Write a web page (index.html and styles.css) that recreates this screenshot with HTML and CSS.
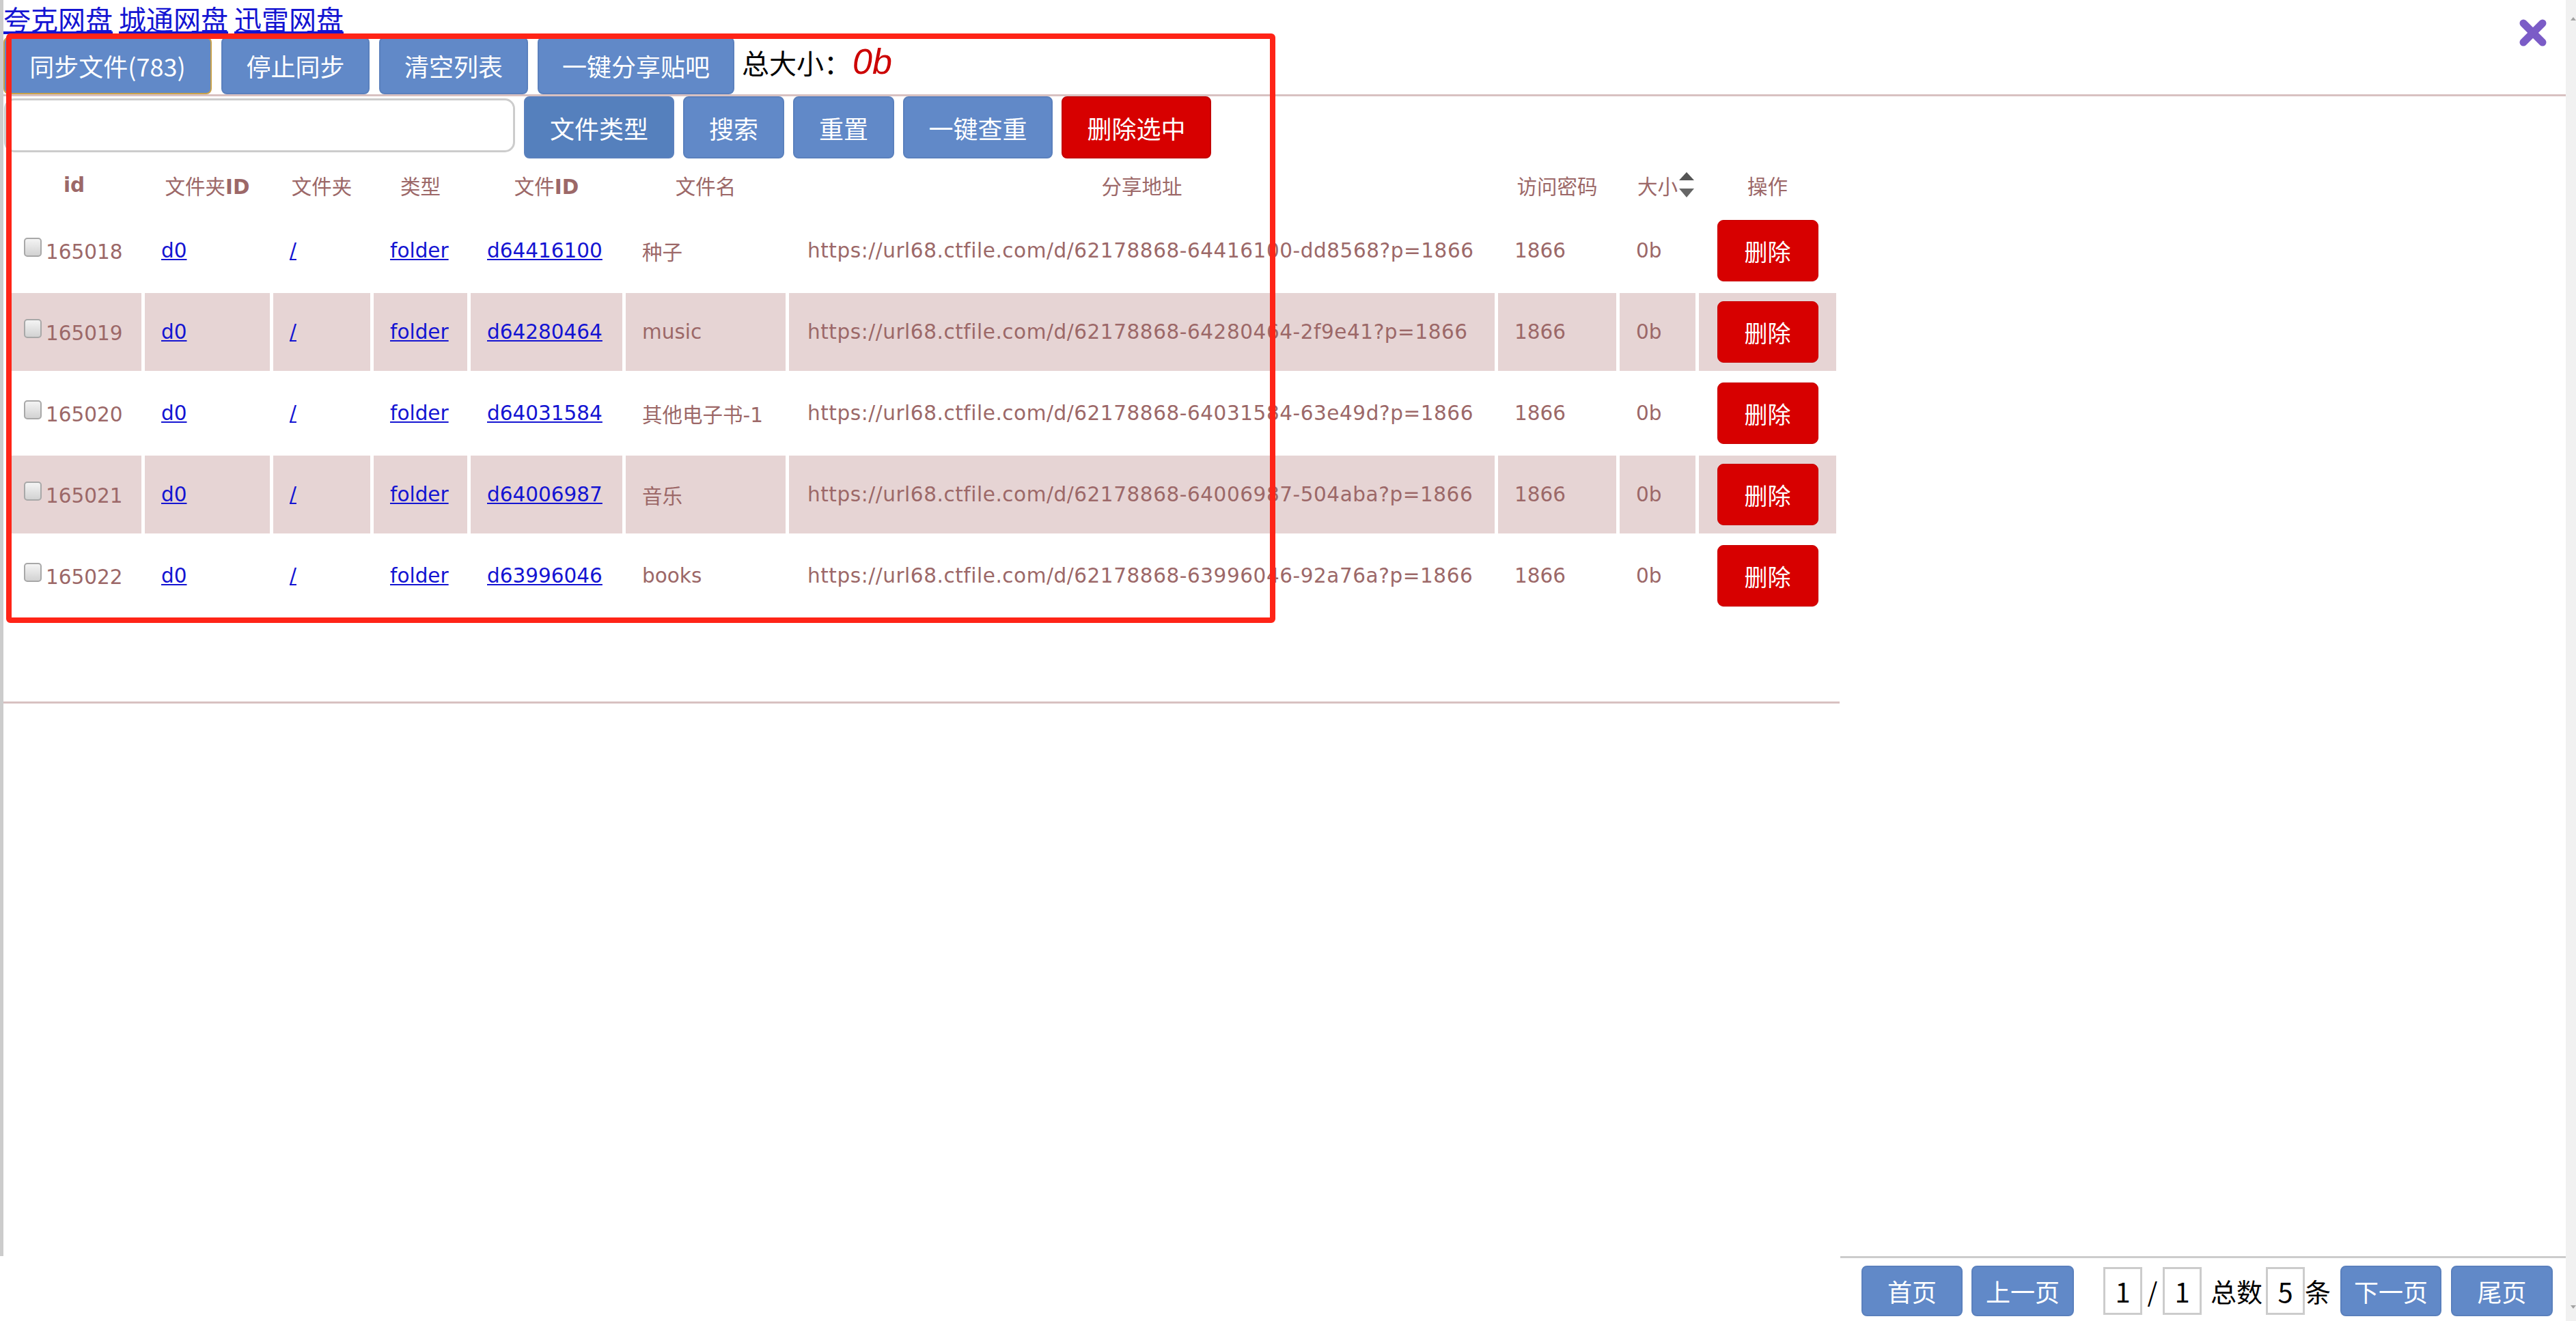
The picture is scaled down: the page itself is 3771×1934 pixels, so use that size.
FILE: index.html
```html
<!DOCTYPE html>
<html lang="zh-CN">
<head>
<meta charset="utf-8">
<title>文件同步</title>
<link rel="stylesheet" href="styles.css">
</head>
<body>
<div class="app">
  <div class="page">
    <div class="main">
      <div class="links"><a href="#">夸克网盘</a> <a href="#">城通网盘</a> <a href="#">迅雷网盘</a></div>
      <div class="bar bar1">
        <button class="btn btn-focus w-sync">同步文件(783)</button>
        <button class="btn w-stop">停止同步</button>
        <button class="btn w-clear">清空列表</button>
        <button class="btn w-share">一键分享贴吧</button>
        <span class="total">总大小：<em class="total-val">0b</em></span>
      </div>
      <div class="bar bar2">
        <input class="search" type="text">
        <button class="btn btn-dark w-type">文件类型</button>
        <button class="btn w-s">搜索</button>
        <button class="btn w-s">重置</button>
        <button class="btn w-dup">一键查重</button>
        <button class="btn btn-red w-del">删除选中</button>
      </div>
      <div class="grid-wrap">
        <table class="grid">
          <thead>
            <tr>
              <th class="c1"><span class="b">id</span></th>
              <th class="c2">文件夹<span class="b">ID</span></th>
              <th class="c3">文件夹</th>
              <th class="c4">类型</th>
              <th class="c5">文件<span class="b">ID</span></th>
              <th class="c6">文件名</th>
              <th class="c7">分享地址</th>
              <th class="c8">访问密码</th>
              <th class="c9">大小<span class="sort"></span></th>
              <th class="c10">操作</th>
            </tr>
          </thead>
          <tbody>
            <tr>
              <td><input class="chk" type="checkbox">165018</td>
              <td><a href="#">d0</a></td>
              <td><a href="#">/</a></td>
              <td><a href="#">folder</a></td>
              <td><a href="#">d64416100</a></td>
              <td>种子</td>
              <td class="url">https://url68.ctfile.com/d/62178868-64416100-dd8568?p=1866</td>
              <td>1866</td>
              <td>0b</td>
              <td class="op"><button class="btn-del">删除</button></td>
            </tr>
            <tr class="alt">
              <td><input class="chk" type="checkbox">165019</td>
              <td><a href="#">d0</a></td>
              <td><a href="#">/</a></td>
              <td><a href="#">folder</a></td>
              <td><a href="#">d64280464</a></td>
              <td>music</td>
              <td class="url">https://url68.ctfile.com/d/62178868-64280464-2f9e41?p=1866</td>
              <td>1866</td>
              <td>0b</td>
              <td class="op"><button class="btn-del">删除</button></td>
            </tr>
            <tr>
              <td><input class="chk" type="checkbox">165020</td>
              <td><a href="#">d0</a></td>
              <td><a href="#">/</a></td>
              <td><a href="#">folder</a></td>
              <td><a href="#">d64031584</a></td>
              <td>其他电子书-1</td>
              <td class="url">https://url68.ctfile.com/d/62178868-64031584-63e49d?p=1866</td>
              <td>1866</td>
              <td>0b</td>
              <td class="op"><button class="btn-del">删除</button></td>
            </tr>
            <tr class="alt">
              <td><input class="chk" type="checkbox">165021</td>
              <td><a href="#">d0</a></td>
              <td><a href="#">/</a></td>
              <td><a href="#">folder</a></td>
              <td><a href="#">d64006987</a></td>
              <td>音乐</td>
              <td class="url">https://url68.ctfile.com/d/62178868-64006987-504aba?p=1866</td>
              <td>1866</td>
              <td>0b</td>
              <td class="op"><button class="btn-del">删除</button></td>
            </tr>
            <tr>
              <td><input class="chk" type="checkbox">165022</td>
              <td><a href="#">d0</a></td>
              <td><a href="#">/</a></td>
              <td><a href="#">folder</a></td>
              <td><a href="#">d63996046</a></td>
              <td>books</td>
              <td class="url">https://url68.ctfile.com/d/62178868-63996046-92a76a?p=1866</td>
              <td>1866</td>
              <td>0b</td>
              <td class="op"><button class="btn-del">删除</button></td>
            </tr>
          </tbody>
        </table>
      </div>
    </div>
    <div class="pager-row">
      <div class="pager">
        <button class="btn pbtn w-p1">首页</button>
        <button class="btn pbtn w-p2 gap-prev">上一页</button>
        <input class="pnum" type="text" value="1">
        <span class="ptext slash">/</span>
        <input class="pnum" type="text" value="1">
        <span class="ptext count">总数</span>
        <input class="pnum" type="text" value="5">
        <span class="ptext unit">条</span>
        <button class="btn pbtn w-p1 gap-next">下一页</button>
        <button class="btn pbtn w-p3">尾页</button>
      </div>
    </div>
    <svg class="close" viewBox="0 0 40 40" aria-label="关闭">
      <line x1="6" y1="6" x2="34" y2="34"/>
      <line x1="34" y1="6" x2="6" y2="34"/>
    </svg>
    <div class="annot"></div>
  </div>
  <div class="scrollbar"><span class="sb-up"></span><span class="sb-down"></span></div>
</div>
</body>
</html>
```
FILE: styles.css
```css
html, body {
  margin: 0;
  padding: 0;
  background: #fff;
}
body {
  font-family: "Noto Sans CJK SC", sans-serif;
  overflow: hidden;
}
.app {
  display: flex;
  height: 1934px;
}
.page {
  flex: 1;
  min-width: 0;
  display: flex;
  flex-direction: column;
  position: relative;
}
.main {
  flex: 1;
  border-left: 5px solid #cccccc;
}
.links {
  height: 54px;
  font-size: 40px;
  line-height: 55px;
  white-space: nowrap;
}
.links a {
  color: #1414d2;
  text-decoration: underline;
}
.bar {
  display: flex;
}
.bar1 {
  height: 84px;
  gap: 14px;
  align-items: center;
  border-bottom: 3px solid #d8c1c1;
}
.bar2 {
  height: 91px;
  gap: 13px;
  align-items: flex-start;
}
.btn {
  font-family: "Noto Sans CJK SC", sans-serif;
  font-size: 36px;
  color: #fff;
  background: #6189c8;
  border: 2px solid #5a80bd;
  border-radius: 8px;
  padding: 0;
  box-sizing: border-box;
  white-space: nowrap;
}
.bar1 .btn { height: 84px; }
.bar2 .btn { height: 91px; }
.btn-focus { border-color: #c9a24a; }
.btn-dark { background: #5580bd; }
.btn-red { background: #d70000; border-color: #c40000; }
.w-sync { width: 305px; }
.w-stop { width: 217px; }
.w-clear { width: 218px; }
.w-share { width: 288px; }
.w-type { width: 220px; }
.w-s { width: 148px; }
.w-dup { width: 219px; }
.w-del { width: 219px; }
.total {
  font-size: 40px;
  color: #000;
  white-space: nowrap;
  padding-bottom: 12px;
  margin-left: -3px;
}
.total-val {
  font-family: "Liberation Sans", sans-serif;
  font-style: italic;
  font-size: 52px;
  color: #cc0000;
  margin-left: 2px;
}
.search {
  width: 748px;
  height: 79px;
  margin: 3px 0 0 1px;
  border: 3px solid #cccccc;
  border-radius: 15px;
  box-sizing: border-box;
  background: #fff;
  outline: none;
}

/* table */
.grid-wrap {
  width: 2688px;
  padding-bottom: 122px;
  border-bottom: 3px solid #d8c1c1;
}
.grid {
  border-collapse: separate;
  border-spacing: 5px;
  table-layout: fixed;
  width: 2688px;
  font-family: "DejaVu Sans", "Noto Sans CJK SC", sans-serif;
  font-size: 29.5px;
  color: #9c6868;
}
.grid th {
  height: 68px;
  padding: 0;
  font-weight: normal;
  text-align: center;
  vertical-align: middle;
  white-space: nowrap;
}
.grid th .b { font-weight: bold; }
.c1 { width: 197px; }
.c2 { width: 183px; }
.c3 { width: 142px; }
.c4 { width: 137px; }
.c5 { width: 222px; }
.c6 { width: 234px; }
.c7 { width: 1033px; }
.c8 { width: 173px; }
.c9 { width: 111px; position: relative; }
.c10 { width: 201px; }
.sort {
  position: absolute;
  left: 86px;
  top: 15px;
  width: 24px;
  height: 38px;
}
.sort::before,
.sort::after {
  content: "";
  position: absolute;
  left: 1px;
  border-left: 11px solid transparent;
  border-right: 11px solid transparent;
}
.sort::before {
  top: 0;
  border-bottom: 12px solid #555555;
}
.sort::after {
  top: 24px;
  border-top: 13px solid #666666;
}
.grid td {
  height: 114px;
  padding: 0 24px;
  white-space: nowrap;
  overflow: hidden;
  vertical-align: middle;
}
.grid tr.alt td { background: #e6d4d4; }
.grid td a { color: #1414d2; }
.grid td.url { letter-spacing: 0.55px; padding-left: 27px; }
.grid td.op { padding: 0; text-align: center; }
.chk {
  -webkit-appearance: none;
  appearance: none;
  width: 26px;
  height: 28px;
  margin: 0 6px 0 1px;
  border: 2px solid #a8a8a8;
  border-radius: 5px;
  background: linear-gradient(#f4f4f4, #d2d2d2);
  box-sizing: border-box;
  vertical-align: 3px;
}
.btn-del {
  width: 148px;
  height: 90px;
  background: #d70000;
  border: 1px solid #c60000;
  border-radius: 9px;
  color: #fff;
  font-family: "Noto Sans CJK SC", sans-serif;
  font-size: 34px;
  padding: 0;
}

/* pager */
.pager-row {
  height: 95px;
  display: flex;
  justify-content: flex-end;
}
.pager {
  width: 1062px;
  box-sizing: border-box;
  border-top: 3px solid #cccccc;
  display: flex;
  align-items: flex-start;
  padding: 11px 19px 0 31px;
}
.pbtn { height: 74px; }
.w-p1 { width: 148px; }
.w-p2 { width: 150px; }
.w-p3 { width: 149px; }
.gap-prev { margin-left: 13px; margin-right: 43px; }
.gap-next { margin-right: 14px; }
.pnum {
  width: 57px;
  height: 70px;
  margin-top: 2px;
  border: 3px solid #cccccc;
  box-sizing: border-box;
  padding: 0;
  font-family: "Noto Sans CJK SC", sans-serif;
  font-size: 40px;
  text-align: center;
  color: #000;
  background: #fff;
}
.ptext {
  font-size: 38px;
  line-height: 74px;
  color: #000;
  white-space: nowrap;
}
.slash { width: 30px; text-align: center; }
.count { margin: 0 5px 0 13px; }
.unit { width: 38px; margin-right: 14px; }

/* overlays */
.close {
  position: absolute;
  top: 28px;
  right: 28px;
  width: 40px;
  height: 40px;
}
.close line {
  stroke: #7b5cc7;
  stroke-width: 11;
  stroke-linecap: round;
}
.annot {
  position: absolute;
  left: 9px;
  top: 49px;
  width: 1858px;
  height: 863px;
  box-sizing: border-box;
  border: 8px solid #ff2417;
  border-radius: 6px;
  pointer-events: none;
}

/* scrollbar */
.scrollbar {
  width: 15px;
  background: #f1f1f1;
  display: flex;
  flex-direction: column;
  justify-content: space-between;
  align-items: flex-end;
  padding: 25px 0 18px;
  box-sizing: border-box;
}
.sb-up {
  width: 0;
  height: 0;
  border-left: 4px solid transparent;
  border-right: 4px solid transparent;
  border-bottom: 5px solid #a3a3a3;
}
.sb-down {
  width: 0;
  height: 0;
  border-left: 4px solid transparent;
  border-right: 4px solid transparent;
  border-top: 5px solid #a3a3a3;
}
```
